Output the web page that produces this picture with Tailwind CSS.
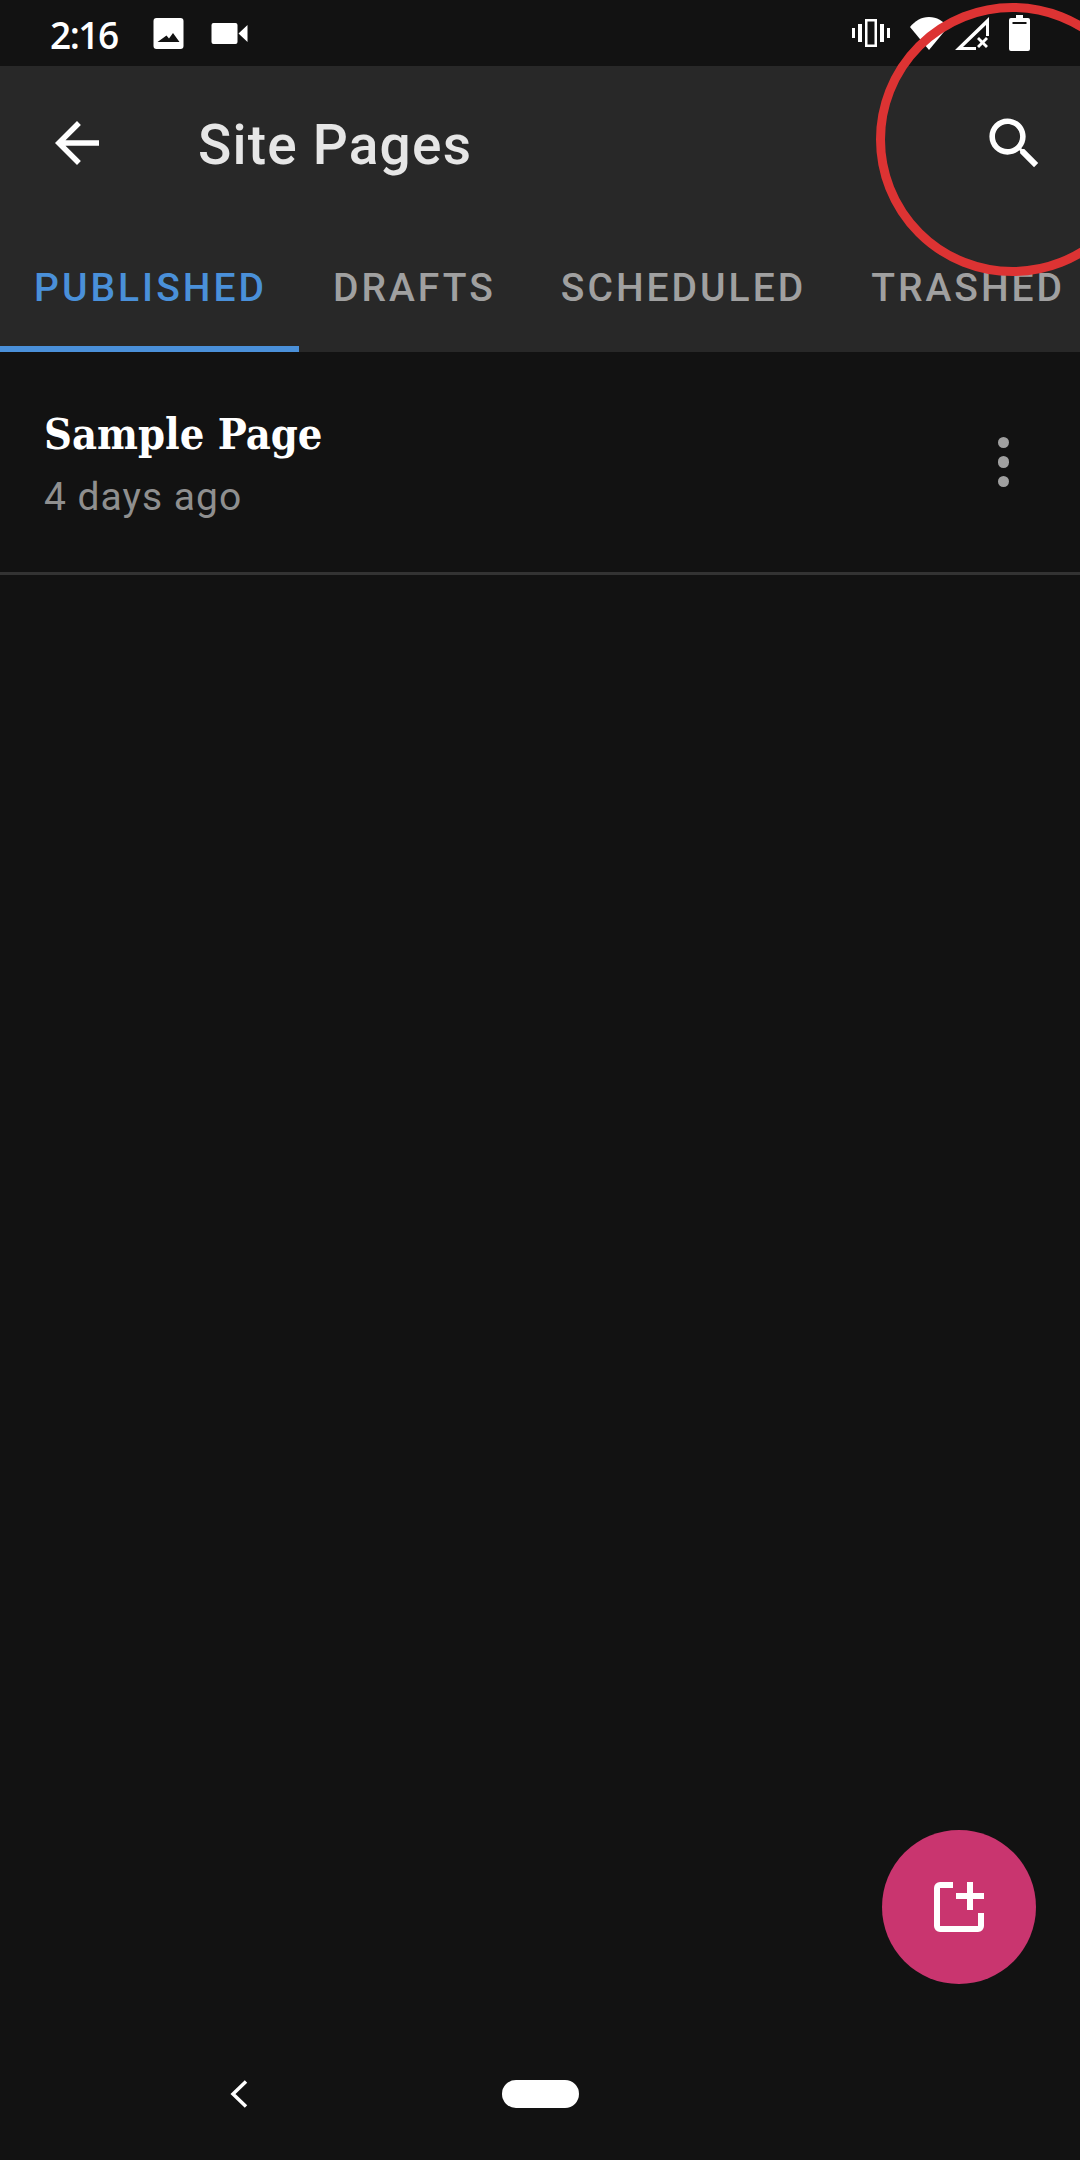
<!DOCTYPE html>
<html lang="en">
<head>
  <meta charset="UTF-8" />
  <title>Site Pages</title>
  <script src="https://cdn.jsdelivr.net/npm/@tailwindcss/browser@4"></script>
</head>
<body class="bg-[#121212]">
  <div class="relative w-[1080px] h-[2160px] overflow-hidden flex flex-col bg-[#121212] font-['Roboto',sans-serif]">

    <!-- status bar -->
    <div class="h-[66px] shrink-0 flex items-center pl-[50px] pr-[50px] text-white">
      <span class="text-[37px] leading-none font-semibold font-['Open_Sans',sans-serif] tracking-[-1.5px] pt-[2px]">2:16</span>
      <svg class="ml-[35px] w-[31px] h-[31px]" viewBox="0 0 30 31"><path fill-rule="evenodd" fill="#fff" d="M3 0h24a3 3 0 0 1 3 3v25a3 3 0 0 1-3 3H3a3 3 0 0 1-3-3V3a3 3 0 0 1 3-3zM4 24h22l-6.500-9-4 5.500-2.500-3z"/></svg>
      <svg class="ml-[27px] w-[37px] h-[21px]" viewBox="0 0 36 21"><path fill="#fff" d="M2 0h22a2 2 0 0 1 2 2v17a2 2 0 0 1-2 2H2a2 2 0 0 1-2-2V2a2 2 0 0 1 2-2zM27 10.500L36 2v17z"/></svg>
      <div class="ml-auto flex items-center">
        <svg class="w-[38px] h-[28px]" viewBox="0 0 38 28" fill="#fff"><rect x="0" y="9" width="3" height="10"/><rect x="6" y="5" width="4" height="18"/><path fill-rule="evenodd" d="M13 0h12v28H13zM15.500 2.500v23h7v-23z"/><rect x="28" y="5" width="4" height="18"/><rect x="35" y="9" width="3" height="10"/></svg>
        <svg class="ml-[20px] w-[38px] h-[33px]" viewBox="0 0 38 33"><path fill="#fff" d="M19 33L0 10C5 4 11 0 19 0s14 4 19 10z"/></svg>
        <svg class="ml-[7px] w-[34px] h-[33px]" viewBox="0 0 34 33"><path fill="#fff" fill-rule="evenodd" d="M34 0v19h-3V8L8 30h13v3H0zM22 22l2-2 3.500 3.500L31 20l2 2-3.500 3.500L33 29l-2 2-3.500-3.500L24 31l-2-2 3.500-3.500z"/></svg>
        <svg class="ml-[20px] w-[21px] h-[36px]" viewBox="0 0 21 36"><path fill="#fff" fill-rule="evenodd" d="M7 0h7v3h5a2 2 0 0 1 2 2v29a2 2 0 0 1-2 2H2a2 2 0 0 1-2-2V5a2 2 0 0 1 2-2h5zM3.500 7v2h14V7z"/></svg>
      </div>
    </div>

    <!-- app bar + tabs -->
    <div class="h-[286px] shrink-0 bg-[#282828] flex flex-col">
      <div class="h-[154px] flex items-center pl-[44px] pr-[42px]">
        <svg class="w-[66px] h-[66px]" viewBox="0 0 24 24"><path fill="#fff" d="M20 11H7.830l5.590-5.590L12 4l-8 8 8 8 1.410-1.410L7.830 13H20v-2z"/></svg>
        <h1 class="ml-[88px] mt-[5px] text-[55px] leading-none font-medium tracking-[1.200px] text-[#e6e6e6]">Site Pages</h1>
        <svg class="ml-auto -mr-[10px] mt-[1px] w-[67px] h-[67px]" viewBox="0 0 24 24"><path fill="#fff" d="M15.500 14h-.790l-.280-.270C15.410 12.590 16 11.110 16 9.500 16 5.910 13.090 3 9.500 3S3 5.910 3 9.500 5.910 16 9.500 16c1.610 0 3.090-.590 4.230-1.570l.270.280v.790l5 4.990L20.490 19l-4.990-5zm-6 0C7.010 14 5 11.990 5 9.500S7.010 5 9.500 5 14 7.010 14 9.500 11.990 14 9.500 14z"/></svg>
      </div>
      <div class="flex-1 flex items-stretch text-[39px] leading-none font-medium tracking-[3px] text-[#a0a0a0] whitespace-nowrap">
        <div class="w-[299px] pl-[34px] pt-[49px] border-b-[6px] border-[#4a90d9] text-[#4a90d9]">PUBLISHED</div>
        <div class="pl-[34px] pr-[31px] pt-[49px]">DRAFTS</div>
        <div class="pl-[34px] pr-[31px] pt-[49px]">SCHEDULED</div>
        <div class="pl-[34px] pt-[49px]">TRASHED</div>
      </div>
    </div>

    <!-- page list -->
    <div class="flex-1">
      <div class="h-[223px] pl-[44px] pr-[71px] flex items-center justify-between border-b-[3px] border-[#333333]">
        <div>
          <div class="text-[43px] leading-[60px] font-bold text-white font-['DejaVu_Serif',serif] [font-stretch:condensed]">Sample Page</div>
          <div class="mt-[10px] text-[39px] leading-[46px] tracking-[1px] text-[#8f8f8f]">4 days ago</div>
        </div>
        <div class="flex flex-col gap-[8px]">
          <span class="w-[11.500px] h-[11.500px] rounded-full bg-[#a0a0a0]"></span>
          <span class="w-[11.500px] h-[11.500px] rounded-full bg-[#a0a0a0]"></span>
          <span class="w-[11.500px] h-[11.500px] rounded-full bg-[#a0a0a0]"></span>
        </div>
      </div>
    </div>

    <!-- navigation bar -->
    <div class="h-[132px] shrink-0 flex items-start pt-[52px] pl-[230px]">
      <svg class="w-[18px] h-[28px]" viewBox="0 0 18 28"><path fill="none" stroke="#fff" stroke-width="3.500" d="M16 1.500L3 14l13 12.500"/></svg>
      <div class="ml-[254px] w-[77px] h-[28px] rounded-full bg-white"></div>
    </div>

    <!-- floating action button -->
    <div class="absolute left-[882px] top-[1830px] w-[154px] h-[154px] rounded-full bg-[#c9356f] flex items-center justify-center">
      <svg class="w-[50px] h-[50px]" viewBox="0 0 50 50"><path fill="none" stroke="#fff" stroke-width="6" d="M19 3H6a3 3 0 0 0-3 3v38a3 3 0 0 0 3 3h38a3 3 0 0 0 3-3V31"/><path fill="none" stroke="#fff" stroke-width="6" d="M22 14h28M36 0v28"/></svg>
    </div>

    <!-- red annotation circle -->
    <div class="absolute left-[876px] top-[3px] w-[273px] h-[273px] rounded-full border-[9px] border-[#dd3333]"></div>
  </div>
</body>
</html>
